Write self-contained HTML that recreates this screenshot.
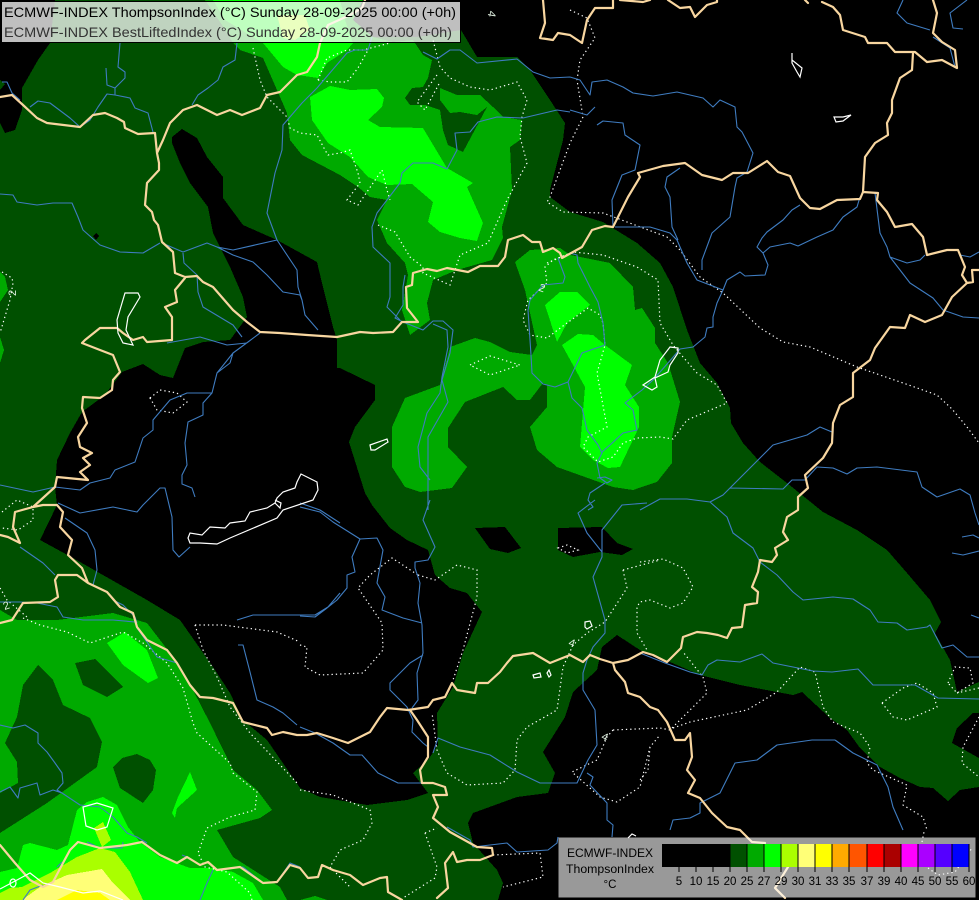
<!DOCTYPE html>
<html><head><meta charset="utf-8"><style>
html,body{margin:0;padding:0;background:#000;width:979px;height:900px;overflow:hidden}
svg{display:block;position:absolute;left:0;top:0}
text{font-family:"Liberation Sans",sans-serif}
.f{shape-rendering:crispEdges}
.r{fill:none;stroke:#3f7cc0;stroke-width:1.1;stroke-linejoin:round}
.b{fill:none;stroke:#f8d6a0;stroke-width:2.2;stroke-linejoin:round;stroke-linecap:round}
.w{fill:none;stroke:#fff;stroke-width:1.2}
.d{fill:none;stroke:#fff;stroke-width:1.2;stroke-dasharray:1.3 3}
</style></head><body>
<svg width="979" height="900" viewBox="0 0 979 900" xmlns="http://www.w3.org/2000/svg">
<rect width="979" height="900" fill="#005000"/>
<g class="f" fill="#000">
<polygon points="0,0 55,0 50,43 38,60 22,88 22,110 15,130 5,133 0,123 0,90 5,84 0,80"/>
<polygon points="363,0 353,20 373,37 417,37 461,30 477,57 517,57 530,70 550,100 565,123 563,140 550,190 550,197 570,212 603,222 637,243 660,263 673,287 687,330 700,363 717,383 730,408 731,423 743,443 760,462 787,483 823,512 857,530 887,550 907,573 930,600 941,622 935,633 950,660 957,692 979,682 979,0"/>
<polygon points="979,713 973,713 957,728 952,743 979,758"/>
<polygon points="979,787 960,790 948,801 933,788 920,787 900,778 880,767 860,748 847,730 830,718 802,692 793,695 777,692 740,685 700,675 670,662 643,652 617,635 602,647 597,670 573,692 565,717 543,752 555,773 548,793 517,797 473,813 468,823 473,843 497,870 503,883 498,900 979,900"/>
<polygon points="172,143 172,137 182,129 197,138 207,157 223,177 223,198 243,225 277,240 317,262 322,283 333,327 337,340 337,368 340,368 375,385 375,400 355,427 349,442 365,493 375,510 368,500 390,528 407,540 428,550 435,575 450,588 467,593 482,612 463,653 453,687 437,713 438,745 428,760 413,773 428,793 407,800 367,805 320,797 300,788 267,740 243,720 230,693 213,667 180,620 147,600 117,583 73,558 40,540 57,505 55,487 57,460 70,433 82,412 105,395 122,372 143,364 160,375 173,378 185,348 203,342 230,340 247,317 243,297 230,267 213,233 208,207 190,183 180,163"/>
<polygon points="475,528 505,527 521,548 508,553 490,549"/>
<polygon points="558,528 602,527 617,543 633,549 622,555 600,552 573,557 558,550"/>
<polygon points="96,233 99,236 96,240 93,236"/>
</g>
<g class="f" fill="#00aa00">
<polygon points="205,0 222,25 233,43 240,50 263,58 277,90 287,113 290,140 302,155 340,175 358,187 370,197 387,200 377,220 387,243 405,263 408,275 402,310 410,335 430,320 427,303 433,280 457,270 492,260 503,238 502,227 512,190 510,147 520,140 522,120 503,117 493,107 480,95 457,95 440,88 440,100 450,113 460,112 477,115 487,107 463,152 448,145 443,130 440,110 425,105 410,105 405,98 412,88 423,87 428,78 432,60 423,55 413,40 393,42 373,37 353,20 363,0"/>
<polygon points="515,262 530,250 560,248 570,255 610,263 633,287 635,310 642,308 655,328 655,343 668,363 680,402 672,437 672,463 657,482 633,490 613,487 557,467 537,450 530,427 547,407 547,385 543,383 530,400 517,400 503,387 465,402 448,428 448,447 467,467 452,488 420,492 405,487 392,467 392,427 405,398 440,385 450,347 475,338 490,342 510,352 532,355 537,345 525,290"/>
<polygon points="0,272 5,277 8,290 0,302"/>
<polygon points="0,337 4,350 0,363"/>
<polygon points="0,610 17,620 57,620 113,613 147,623 170,653 193,690 210,723 233,770 257,790 272,810 260,818 217,830 233,857 280,887 287,900 0,900"/>
<polygon points="300,900 315,896 327,900"/>
</g>
<g class="f" fill="#005000">
<polygon points="38,665 53,680 63,705 90,718 102,742 97,767 47,803 0,833 0,793 18,783 17,762 5,743 17,717 23,685"/>
<polygon points="75,663 95,659 123,687 107,697 83,685"/>
<polygon points="113,767 122,758 137,754 150,760 156,770 153,790 143,803 120,788"/>
</g>
<g class="f" fill="#00ff00">
<polygon points="213,0 225,20 263,43 283,67 297,75 318,78 327,63 347,50 353,43 345,20 340,0"/>
<polygon points="310,97 330,86 350,90 377,89 384,98 382,107 368,120 380,127 423,128 447,168 473,183 467,187 483,223 477,241 460,238 440,232 428,222 433,202 412,184 387,185 368,177 350,157 328,143 312,120"/>
<polygon points="545,305 560,292 577,292 590,305 567,323 557,342"/>
<polygon points="562,345 578,334 593,335 605,345 632,365 625,385 639,407 639,427 620,467 608,468 593,460 580,447 585,387"/>
<polygon points="107,643 125,632 147,650 158,678 148,683 123,665"/>
<polygon points="190,772 197,790 177,808 175,818 172,813 178,797"/>
<polygon points="87,802 103,797 117,805 128,827 140,842 160,857 190,868 213,868 233,872 253,883 263,900 0,900 0,872 17,868 23,845 30,843 57,850 68,845 77,810"/>
</g>
<g class="f" fill="#aaff00">
<polygon points="277,15 305,15 310,30 295,40 283,38"/>
<polygon points="0,893 10,888 22,887 50,873 77,857 100,848 115,852 130,872 143,900 0,900"/>
<polygon points="94,828 103,822 111,840 102,847"/>
</g>
<polygon class="f" fill="#ffff77" points="22,900 40,887 67,875 102,869 113,883 130,900"/>
<polygon class="f" fill="#ffff00" points="57,900 77,890 100,893 110,900"/>

<path class="d" d="M253,48 260,80 267,97 287,117 290,128 300,133 317,135 325,150 328,155 340,153 350,150 358,173 360,183 347,200 358,205 382,170 387,190 390,200
M378,225 395,232 410,257 423,267 423,273 450,285 460,255 488,243 507,200 527,163 520,137 522,117 527,100 517,82 490,90 470,87 450,78 440,67 433,40
M437,75 417,102 425,110 440,82
M318,80 327,58 347,50 363,50 390,43 M318,80 330,82 347,82 358,68 368,50
M547,263 573,252 603,255 637,267 658,280 660,323 673,345 683,357 697,373 717,385 727,403 687,420 673,439 660,437 637,438 623,443 613,457 598,462 583,447 588,437 607,427 597,373 605,345 603,323 600,315 588,308 567,323 547,338 530,335 523,320 528,300 547,283 545,267 553,260 573,252
M470,365 490,356 520,365 490,375Z
M570,10 587,18 595,38 580,60 577,80 583,117 570,143 550,197 547,202 563,212 603,213 643,228 667,237 680,250 700,277 723,293 760,328 783,342 810,347 857,367 903,383 937,395 952,409 967,427 979,443
M640,562 663,559 683,568 693,587 683,603 670,608 650,600 640,602 637,607 637,633 647,650
M623,570 660,560 M623,570 627,588 605,622 587,633 573,645 563,667 557,710 527,727 517,740 515,770 503,783 467,785 447,773 437,750 432,713
M558,548 567,545 578,550 567,553Z
M418,575 435,580 457,565 477,570 477,597 463,650 453,680
M300,645 307,647 305,667 320,675 363,673 383,650 382,623 358,588 370,575 392,558 418,575
M195,625 203,650 217,677 230,707 250,733 297,783 M195,625 223,625 277,632 300,642
M613,730 660,728 670,730 707,693 703,677 683,652 M613,730 607,737 597,760 572,772 600,797 617,802 640,787 650,747 660,735
M650,747 648,770 640,780
M673,728 690,722 747,710 777,692 800,667 815,672 823,707 833,722 860,733 870,747 867,763 873,770 907,785 903,805 923,817 927,830
M882,703 903,688 917,683 933,693 937,707 907,720 893,717Z
M948,683 955,667 970,668 973,683 957,693 948,683 M979,688 957,693
M979,717 963,747 962,763 979,777
M300,790 333,795 370,810 372,823 363,840 340,850 330,867 350,887
M425,833 437,828 M425,833 437,867 435,878 403,898
M493,855 540,853 543,877 503,887
M928,868 938,875 955,872 972,848 M922,842 924,832
M23,618 40,625 67,632 90,643 123,632 143,643 167,663 183,688 193,723 197,733 230,763 233,773 257,792 255,810 230,817 207,828 198,853 205,867 227,872 250,893 252,900
M2,272 12,278 13,283 10,300 0,333 M0,588 7,600 27,617
M2,512 17,500 33,507 33,520 18,530 2,528
M150,398 160,390 177,393 187,402 173,413 157,410Z"/>

<path class="r" d="M120,43 118,67 125,72 125,78 115,88 115,95 M106,68 107,85 115,88
M115,95 107,94 98,107 90,120 80,127 70,118 50,103 38,101 30,107
M115,95 130,98 135,108 148,113 153,132
M2,82 7,82 12,93 20,100
M237,43 235,60 223,67 218,80 208,88 198,95 192,105
M0,194 13,195 17,202 37,205 53,203 72,203 78,217 83,230 100,245 120,252 143,253 160,243
M162,243 183,252 207,243 217,247 233,255 253,262 267,275 283,292 300,295 302,300 305,315 318,330
M217,247 233,250 277,240 297,270 298,287 302,300
M183,253 184,263 197,275 198,292 203,307 213,313 233,325 242,337
M277,240 267,213 275,173 282,150 283,125 302,103 317,88 347,53 355,50 368,50 372,37
M400,183 377,213 372,227 373,247 390,263 390,297 387,307 400,320
M400,183 402,173 413,163 433,163 447,169 457,150 455,133 470,132 478,122 497,117 523,118 557,110 570,112
M423,52 437,59 450,50 460,50 477,63 517,59 533,72 550,78 570,77
M405,275 403,287 403,305 395,318 403,322 423,330 433,321 443,321 453,330 450,353 442,380 448,402 428,437 428,470 428,510
M433,324 447,330 448,347 442,377 440,393 427,413 418,447 420,467 430,480
M558,258 565,277 563,283 543,285 530,300 528,310 530,340 531,355 532,373 543,384 555,387 568,382 582,353 605,345 603,323 598,302 590,287 578,263 577,255 570,253
M568,382 572,398 582,408 587,430 598,445 602,453 597,463 600,478 607,483 612,480 605,477 597,478 M605,483 590,493 588,500 593,507 588,510
M602,452 610,445 623,433 637,430 633,410 625,403 642,390 653,380 668,363 680,349 693,347 705,337 707,328 713,327 713,317 717,303 723,290 727,280 740,272 745,276 765,275 768,265 763,253 757,247 762,238 767,232 783,220 792,210 800,205
M763,253 770,247 790,243 798,246 817,237 833,230 843,217 857,207 860,197
M723,290 697,280 687,263 677,240 670,233 650,227 615,227
M678,240 672,227 670,197 665,187 667,177 680,168
M702,270 702,260 712,233 730,217 735,187 737,178 747,172 753,153 742,132 737,127 735,107 720,100 713,107 703,98 677,92 653,96 633,93 623,87 607,80 592,82 590,95 580,80 570,77
M570,110 587,115 595,107
M597,125 603,121 623,123 625,135 640,145 635,170 622,175 612,200 613,227
M903,0 897,13 907,23 930,30 M967,0 950,13 953,28 963,29 M933,37 950,48 955,67
M875,193 880,233 887,247 890,257 910,283 933,298 943,310 963,317 979,318
M890,257 907,263 920,260 925,255 M960,255 970,257 979,252
M640,510 660,499 687,499 710,502 723,495 740,478 758,460 773,445 807,435 820,427 832,432
M730,488 783,489 792,480 805,480 817,467 833,468 847,474 857,468 877,467 917,472 922,487 937,497 960,489 970,495 975,513 979,525
M962,537 973,535 979,538 M952,553 963,555 979,551
M710,502 727,517 733,533 753,548 760,562 777,575 793,592 803,600 833,597 853,599 870,610 878,622 897,623 907,630 927,627 930,625 942,648 953,645 967,657 979,657
M971,615 979,618
M640,653 665,663 690,672 702,675 708,665 717,660 740,662 762,654 773,663 813,671 832,672 858,669 873,685 897,685 915,685 938,698 979,699
M835,740 812,740 777,745 757,760 735,763 723,787 720,793 700,803 700,813 690,818 673,820 670,830
M835,740 853,753 877,765 888,787 893,807 903,830
M647,503 622,505 602,530 602,557 593,577 605,620 605,633 593,647 587,660 583,673 583,690 595,710 597,745 588,760 577,783 540,783 517,772 490,755 460,747 438,738 433,753
M595,500 578,513 587,533 602,552
M587,773 593,777 590,785 607,803 607,820 613,825 612,837
M430,500 423,520 435,547 428,560 415,562 415,568 420,583 418,603 422,625 423,653 417,673 418,700 412,708
M300,507 320,512 333,522 360,539 377,538 383,550 377,583 385,597 382,610 403,618 422,623
M360,539 352,557 355,572 347,575 347,588 337,600 327,608 315,617 300,616
M423,655 410,663 390,683 390,690 407,707 413,720 412,732 423,743 428,747
M300,727 315,733 333,743 350,755 362,755 378,773 398,783 422,783
M447,827 470,840 473,847 507,843 517,852 548,850 557,843 558,837
M0,485 33,492 55,487 80,490 90,483 110,478 115,470 135,462 143,438 153,430 153,420 170,400 187,393 212,393 217,373 233,353 248,342 260,333
M167,343 200,337 227,345 247,343
M212,393 203,403 203,415 188,422 185,443 187,465 182,475 182,484 192,488 195,497
M217,373 230,363 233,353
M58,503 80,513 113,507 137,512 143,505 160,488 165,488 172,517 173,550 179,557 190,547
M300,503 320,510 340,523
M65,518 87,533 95,550 97,570 93,585
M20,547 43,563 55,575
M340,593 328,607 315,615 293,615 253,615 237,620
M0,602 20,602 37,603 57,607 63,617 83,620 113,620 135,622 137,628 147,642 157,657 177,663
M238,645 243,645 250,672 257,700 273,707 283,713 297,725
M0,725 13,728 25,725 38,733 38,743 47,752 55,763 62,773 63,783 57,790 62,793 80,805 100,807 113,817 127,833 137,837 147,843
M0,792 10,787 18,798 20,788 37,783 40,795 53,790 62,793
M87,842 100,848 122,848 123,842 M57,867 62,862 M23,900 30,890 43,885
M182,855 187,857 M213,870 207,883 200,900 M217,870 243,867 263,883 277,882 290,863 300,867
M113,600 123,605 135,617 137,623"/>

<path class="b" d="M0,97 12,95 23,105 37,118 47,123 80,127 93,115 105,113 117,118 124,122 125,128 138,134 155,133 157,153
M157,153 163,140 170,123 183,110 197,105 217,115 230,110 242,115 260,108 267,95 280,92 297,75 307,72 317,57 320,43 328,25 350,15 362,8 365,0
M157,153 159,163 159,170 147,183 145,205 152,212 154,220 158,225 162,242 173,252 175,273 185,277 197,276 203,282 213,287 233,310 247,322 260,332 280,333 307,335 337,337 360,332 373,333 393,332 402,322 418,322 407,308 406,287 412,285 413,273 427,269 437,271 447,268 468,272 480,266 498,266 505,257 508,240 523,235 532,242 540,242 543,252 553,248 560,253 562,258 573,252 582,247 592,230 605,226 613,227 628,197 640,177 638,173 663,166 685,163 702,175 722,180 733,173 748,173 767,161 778,172 790,176 800,198 810,208 820,209 837,200 860,199 863,192 878,193 877,200 887,212 895,227 912,224 923,237 927,255 947,250 958,250 965,267 962,275 967,283 952,297 942,315 925,322 910,315 905,328 890,327 875,348 870,360 853,373 853,397 840,405 833,423 832,443 823,458 805,475 808,488 798,497 798,510 787,517 783,532 788,540 775,548 777,555 772,562 760,560 758,572 752,587 758,592 757,603 745,605 742,627 732,628 727,638 718,635 707,633 697,632 683,637 681,648 667,662 653,655 643,652 628,660 613,663 600,659 590,655 583,662 570,655 550,663 533,653 513,656 507,663 500,672 488,683 477,683 475,693 457,690 452,683 445,697 433,700 428,707 408,710 387,708 380,717 370,732 360,737 348,743 333,738 317,733 307,735 297,735 283,732 272,735 267,728 243,722 233,703 213,698 200,697 190,685 177,663 167,650 147,640 137,627 133,613 120,607 107,592 88,583 82,568 68,555 72,540 60,527 63,512 57,505 43,505 33,507 15,512 13,527 20,543 8,537 0,535
M33,507 55,487 57,477 88,480 80,472 90,465 83,458 92,453 80,447 78,437 87,423 82,408 83,397 100,398 112,390 113,380 120,372 113,355 100,350 82,343 85,340 100,328 117,328 123,333 133,340 143,337 147,342 172,340 172,317 165,307 177,302 175,290 185,278
M12,620 23,603 50,602 58,597 55,580 58,575 77,575 88,583
M0,623 12,620
M0,845 15,863 30,880 43,887 53,882 63,863 70,850 78,842 100,848 127,845 142,842 160,855 177,863 187,857 200,865 208,862 217,870 240,867 263,883 277,882 290,865 300,868 308,878 318,877 322,865 333,870 350,875 363,885 380,878 387,877 388,892 402,900
M437,898 448,888 445,863 453,852 457,862 467,860 480,860 493,855 492,848 477,847 468,842 450,832 433,818 438,807 433,795 447,795 445,787 433,783 422,783 420,770 428,757 428,737 417,720 410,710
M613,663 615,670 625,682 628,693 640,697 650,707 658,710 667,722 675,740 685,740 690,733 692,757 687,770 695,780 688,793 700,798 712,813 727,827 740,830 752,842 765,843
M788,867 775,888 785,898
M543,0 545,23 540,38 553,40 558,33 570,35 582,43 587,20 595,8 613,8 613,0
M668,0 680,8 690,7 695,17 707,5 717,2 717,0 M620,0 643,2 650,0 M805,0 808,3
M822,2 833,7 840,15 843,30 865,37 868,43 887,43 895,52 915,52 927,62 942,60 957,68 955,50 942,42 933,33 937,13 933,0
M913,53 912,70 900,78 892,100 892,113 887,123 888,135 875,143 865,157 863,192
M979,270 972,270 973,282 967,283"/>

<path class="w" d="M188,538 190,533 202,535 210,527 225,528 230,523 245,521 250,512 267,508 275,503 277,498 283,492 295,488 297,482 301,474 317,482 318,490 313,500 283,510 277,518 230,538 217,544 200,543 190,543Z M275,500 281,503 280,508 275,503
M125,293 138,293 140,297 128,317 126,330 133,345 123,343 118,333 117,320 122,303Z
M83,807 97,803 113,808 107,827 97,830 86,826Z
M0,889 17,880 30,873 43,883 60,887 83,893 100,891 123,900
M370,445 387,439 388,442 375,450 371,450Z
M670,347 678,348 678,353 670,365 668,372 655,378 657,387 652,390 643,385 655,377 660,360Z
M792,53 792,60 802,68 800,77 797,72 792,63Z
M834,117 843,117 851,115 843,121 836,122Z
M533,675 540,673 541,677 534,678Z M549,670 551,675 549,677 547,673Z
M585,622 590,621 592,626 587,629 585,627Z
M628,838 632,834 636,836"/>
<ellipse cx="13" cy="883" rx="3" ry="4" class="w"/>
<g fill="#e0f0e0" font-size="11">
<text x="539" y="292" transform="rotate(20 543 288)">2</text>
<text x="8" y="296" transform="rotate(-90 12 292)">2</text>
<text x="3" y="609" transform="rotate(-20 7 605)">2</text>
<text x="569" y="647" transform="rotate(20 573 643)">4</text>
<text x="602" y="741" transform="rotate(25 606 737)">4</text>
<text x="488" y="19" transform="rotate(100 492 15)">4</text>
</g>

<rect x="1.5" y="1.5" width="459" height="41" fill="#fff" fill-opacity=".75" stroke="#000" stroke-width="1"/>
<text x="4" y="17" font-size="14" fill="#000" textLength="452" lengthAdjust="spacingAndGlyphs">ECMWF-INDEX ThompsonIndex (°C) Sunday 28-09-2025 00:00 (+0h)</text>
<text x="4" y="37" font-size="14" fill="#333" textLength="448" lengthAdjust="spacingAndGlyphs">ECMWF-INDEX BestLiftedIndex (°C) Sunday 28-09-2025 00:00 (+0h)</text>

<rect x="558.5" y="837.5" width="417" height="60" fill="#fff" fill-opacity=".6"/>
<g class="f">
<rect x="662" y="844" width="68.2" height="23" fill="#000"/>
<rect x="730.2" y="844" width="17.05" height="23" fill="#005000"/>
<rect x="747.25" y="844" width="17.05" height="23" fill="#00aa00"/>
<rect x="764.3" y="844" width="17.05" height="23" fill="#00ff00"/>
<rect x="781.35" y="844" width="17.05" height="23" fill="#aaff00"/>
<rect x="798.4" y="844" width="17.05" height="23" fill="#ffff77"/>
<rect x="815.45" y="844" width="17.05" height="23" fill="#ffff00"/>
<rect x="832.5" y="844" width="17.05" height="23" fill="#ffaa00"/>
<rect x="849.55" y="844" width="17.05" height="23" fill="#ff5500"/>
<rect x="866.6" y="844" width="17.05" height="23" fill="#ff0000"/>
<rect x="883.65" y="844" width="17.05" height="23" fill="#aa0000"/>
<rect x="900.7" y="844" width="17.05" height="23" fill="#ff00ff"/>
<rect x="917.75" y="844" width="17.05" height="23" fill="#aa00ff"/>
<rect x="934.8" y="844" width="17.05" height="23" fill="#5500ff"/>
<rect x="951.85" y="844" width="17.15" height="23" fill="#0000ff"/>
<path d="M679,844V872M696,844V872M713,844V872M730,844V872M747,844V872M764,844V872M781,844V872M798,844V872M815,844V872M832,844V872M849,844V872M867,844V872M884,844V872M901,844V872M918,844V872M935,844V872M952,844V872M969,844V872" stroke="#000" stroke-width="1" fill="none"/>
</g>
<g font-size="11.5" fill="#000" text-anchor="middle">
<text x="679" y="885">5</text><text x="696" y="885">10</text><text x="713" y="885">15</text><text x="730" y="885">20</text><text x="747" y="885">25</text><text x="764" y="885">27</text><text x="781" y="885">29</text><text x="798" y="885">30</text><text x="815" y="885">31</text><text x="832" y="885">33</text><text x="849" y="885">35</text><text x="867" y="885">37</text><text x="884" y="885">39</text><text x="901" y="885">40</text><text x="918" y="885">45</text><text x="935" y="885">50</text><text x="952" y="885">55</text><text x="969" y="885">60</text>
<text x="610" y="857" textLength="86" lengthAdjust="spacingAndGlyphs">ECMWF-INDEX</text>
<text x="610" y="873" textLength="88" lengthAdjust="spacingAndGlyphs">ThompsonIndex</text>
<text x="610" y="888">°C</text>
</g>
</svg>
</body></html>
